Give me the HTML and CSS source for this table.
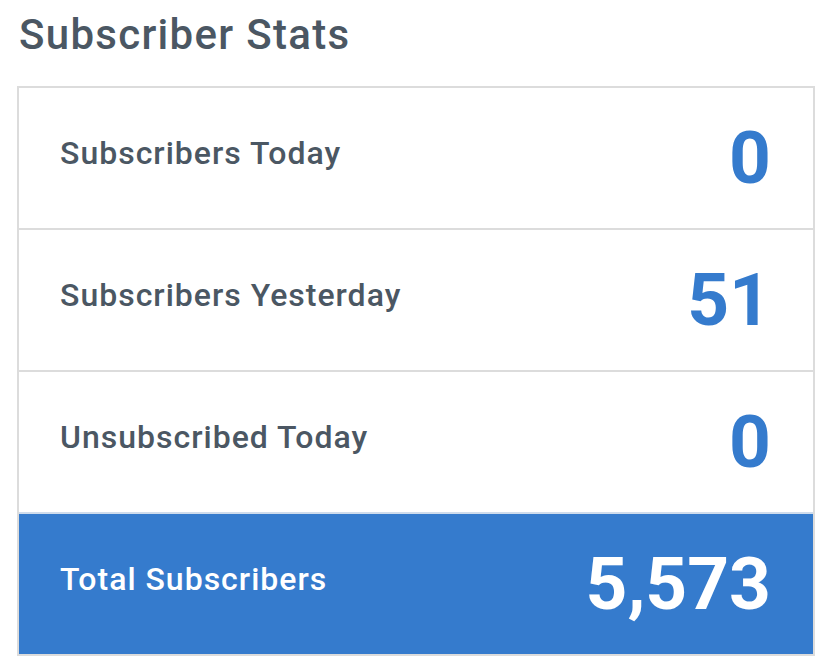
FILE: index.html
```html
<!DOCTYPE html>
<html>
<head>
<meta charset="utf-8">
<link rel="stylesheet" href="styles.css">
</head>
<body>
<div class="page">
  <h1 class="title">Subscriber Stats</h1>
  <div class="stats">
    <div class="row">
      <span class="label">Subscribers Today</span>
      <span class="value">0</span>
    </div>
    <div class="row">
      <span class="label">Subscribers Yesterday</span>
      <span class="value">51</span>
    </div>
    <div class="row">
      <span class="label">Unsubscribed Today</span>
      <span class="value">0</span>
    </div>
    <div class="row total">
      <span class="label">Total Subscribers</span>
      <span class="value">5,573</span>
    </div>
  </div>
</div>
</body>
</html>
```
FILE: styles.css
```css
html, body {
  margin: 0;
  padding: 0;
  background: #ffffff;
}
body {
  font-family: "Roboto", "Open Sans", sans-serif;
}
.page {
  padding: 11px 9px 0 17px;
}
.title {
  margin: 0 0 27px 2px;
  font-size: 42px;
  line-height: 48px;
  font-weight: 500;
  letter-spacing: 1.3px;
  color: #4b5763;
}
.stats {
  border: 2px solid #dcdcdc;
  display: flex;
  flex-direction: column;
}
.row {
  height: 140px;
  display: flex;
  align-items: center;
  justify-content: space-between;
  padding: 0 42px 0 41px;
  border-top: 2px solid #dcdcdc;
}
.row:first-child {
  border-top: none;
}
.label {
  font-size: 32px;
  font-weight: 500;
  letter-spacing: 1px;
  color: #4b5763;
  padding-bottom: 10px;
}
.value {
  font-size: 73px;
  font-weight: 700;
  color: #357bcd;
}
.total {
  background: #357bcd;
  border-top-color: #cfdcec;
}
.total .label,
.total .value {
  color: #ffffff;
}
```
